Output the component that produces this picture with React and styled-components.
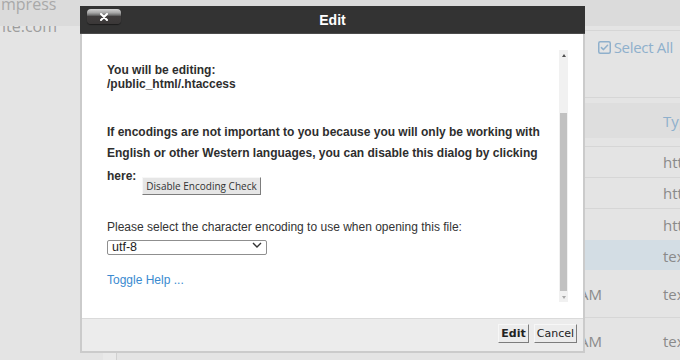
import React from "react";
import styled, { createGlobalStyle } from "styled-components";

const GlobalStyle = createGlobalStyle`
  html, body {
    margin: 0;
    padding: 0;
  }
  body {
    background: #e4e4e4;
    font-family: "Open Sans", sans-serif;
  }
`;

const COLS = "14px 1fr 150px 61px 80px";

const Page = styled.div`
  position: relative;
  width: 680px;
  height: 360px;
  overflow: hidden;
  background: #e4e4e4;
  display: flex;
  flex-direction: column;
`;

const TopBand = styled.div`
  position: relative;
  z-index: 1;
  flex: none;
  height: 26px;
  background: #dbdbdb;
  padding-left: 1px;
  font: 16px/8px "Open Sans", sans-serif;
  color: #a9a9a9;
`;

const Backdrop = styled.div`
  flex: 1;
  min-height: 0;
  display: grid;
  grid-template-columns: 103px 1fr;
`;

const Sidebar = styled.div`
  padding-left: 2px;
`;

const SiteName = styled.div`
  margin-top: -4px;
  font: 16px/8px "Open Sans", sans-serif;
  color: #9d9d9d;
`;

const Main = styled.div`
  overflow: hidden;
  display: flex;
  flex-direction: column;
`;

const Toolbar = styled.div`
  flex: none;
  margin-top: 4px;
  height: 60px;
  border-top: 1px solid #d6d6d6;
  border-bottom: 1px solid #d6d6d6;
  display: flex;
  justify-content: flex-end;
  align-items: flex-start;
  padding: 6px 7px 0 0;
  box-sizing: content-box;
`;

const SelectAll = styled.div`
  display: flex;
  align-items: center;
  gap: 3px;
  font: 15px/20px "Open Sans", sans-serif;
  letter-spacing: -0.3px;
  color: #8fb0cc;
`;

const Table = styled.div`
  width: 640px;
  margin-top: 5px;
`;

const HeadRow = styled.div`
  display: grid;
  grid-template-columns: ${COLS};
  height: 35px;
  align-items: center;
  background: #dedede;
  margin-bottom: 8px;
  font: 15px/20px "Open Sans", sans-serif;
  color: #8fb0cc;
`;

const Row = styled.div`
  display: grid;
  grid-template-columns: ${COLS};
  box-sizing: border-box;
  height: ${(p) => p.$h}px;
  border-top: 1px solid ${(p) => (p.$noLine ? "transparent" : "#d6d6d6")};
  background: ${(p) => (p.$selected ? "#d3dde4" : "transparent")};
  align-items: center;
  font: 15px/20px "Open Sans", sans-serif;
  color: #8a8a8a;
`;

const CheckCell = styled.div`
  align-self: stretch;
  background: #e9e9e9;
  border-right: 1px solid #d0d0d0;
`;

const Cell = styled.div`
  white-space: nowrap;
  overflow: hidden;
  text-align: ${(p) => p.$align || "left"};
  padding-left: ${(p) => (p.$align === "right" ? 0 : 8)}px;
`;

const TypeCell = styled.div`
  white-space: nowrap;
`;

/* ---------- dialog ---------- */

const Dialog = styled.div`
  position: absolute;
  z-index: 5;
  left: 80px;
  top: 6px;
  width: 505px;
  height: 347px;
  box-sizing: border-box;
  border: 2px solid #cbcbcb;
  border-top: 0;
  background: #fff;
  display: flex;
  flex-direction: column;
  font-family: "Liberation Sans", Arial, sans-serif;
  color: #2e2e2e;
`;

const TitleBar = styled.div`
  flex: none;
  margin: 0 -2px;
  height: 28px;
  box-sizing: border-box;
  background: #333;
  border-bottom: 1px solid #4b4b4b;
  display: grid;
  grid-template-columns: 1fr auto 1fr;
  align-items: center;
`;

const CloseButton = styled.button`
  justify-self: start;
  align-self: start;
  margin: 3px 0 0 7px;
  width: 34px;
  height: 15px;
  padding: 0;
  border: 0;
  border-radius: 4px;
  background: linear-gradient(
    #d2d2d2 0%,
    #a8a8a8 25%,
    #6b6b6b 42%,
    #403d3d 48%,
    #3b3838 100%
  );
  box-shadow: 0 1px 1px rgba(0, 0, 0, 0.45);
  display: flex;
  align-items: center;
  justify-content: center;
`;

const Title = styled.div`
  font: bold 14px/18px "Liberation Sans", Arial, sans-serif;
  color: #fff;
`;

const Body = styled.div`
  flex: 1;
  min-height: 0;
  display: flex;
`;

const Content = styled.div`
  flex: 1;
  padding: 29px 0 0 25px;
`;

const Strong = styled.div`
  font: bold 12px/${(p) => p.$lh || 14}px "Liberation Sans", Arial, sans-serif;
  margin-top: ${(p) => p.$mt || 0}px;
`;

const HereRow = styled.div`
  display: flex;
  align-items: flex-start;
  margin-top: 2px;
  font: bold 12px/21px "Liberation Sans", Arial, sans-serif;
`;

const PlainButton = styled.button`
  height: 18px;
  margin: ${(p) => p.$m || 0};
  padding: 0 3px;
  box-sizing: border-box;
  background: #e6e6e6;
  color: #333;
  border: 1px solid;
  border-color: #f7f7f7 #7d7d7d #7d7d7d #f7f7f7;
  border-radius: 0;
  font: 10px/14px "Open Sans", sans-serif;
  white-space: nowrap;
`;

const FooterButton = styled(PlainButton)`
  height: 19px;
  padding: 0 2px;
  font: ${(p) => (p.$bold ? "bold" : "normal")} 11px/15px "DejaVu Sans", Verdana, sans-serif;
  color: #222;
  background: #ececec;
`;

const Label = styled.div`
  margin-top: 25px;
  font: 12px/14px "Liberation Sans", Arial, sans-serif;
  color: #333;
`;

const SelectWrap = styled.div`
  position: relative;
  width: 160px;
  height: 15px;
  margin-top: 3px;
`;

const Select = styled.select`
  appearance: none;
  width: 100%;
  height: 100%;
  box-sizing: border-box;
  margin: 0;
  padding: 0 0 0 4px;
  border: 1px solid #8f8f8f;
  border-radius: 2px;
  background: #fff;
  font: 12.5px/13px "Liberation Sans", Arial, sans-serif;
  color: #222;
  outline: none;
`;

const Chevron = styled.svg`
  position: absolute;
  right: 5px;
  top: 5px;
  pointer-events: none;
`;

const HelpLink = styled.a`
  display: block;
  margin-top: 21px;
  font: 12px/14px "Liberation Sans", Arial, sans-serif;
  color: #3a8ad0;
  text-decoration: none;
`;

const Scrollbar = styled.div`
  flex: none;
  width: 9px;
  margin: 16px 15px 16px 0;
  background: #f1f1f1;
  display: flex;
  flex-direction: column;
`;

const Arrow = styled.div`
  flex: none;
  height: 10px;
  display: flex;
  align-items: center;
  justify-content: center;

  &::after {
    content: "";
    border-left: 2.5px solid transparent;
    border-right: 2.5px solid transparent;
    ${(p) =>
      p.$dir === "up"
        ? "border-bottom: 3px solid #505050;"
        : "border-top: 3px solid #a8a8a8;"}
  }
`;

const Track = styled.div`
  flex: 1;
  display: flex;
  flex-direction: column;
  padding: 53px 1px 1px;
`;

const Thumb = styled.div`
  flex: 1;
  background: #c1c1c1;
`;

const Footer = styled.div`
  flex: none;
  height: 33px;
  box-sizing: border-box;
  border-top: 1px solid #dadada;
  background: #ececec;
  display: flex;
  justify-content: flex-end;
  align-items: flex-start;
  gap: 5px;
  padding: 5px 6px 0 0;
`;

const rows = [
  { h: 31, name: "cgi-bin", date: "", type: "httpd/unix-directory" },
  { h: 31, name: "public_ftp", date: "", type: "httpd/unix-directory" },
  { h: 32, name: "wp-content", date: "", type: "httpd/unix-directory" },
  { h: 30, name: ".htaccess", date: "", type: "text/x-generic", selected: true },
  { h: 47, name: "index.php", date: "Jul 8, 2022, 9:12 AM", type: "text/x-generic", noLine: true },
  { h: 46, name: "license.txt", date: "Jul 8, 2022, 9:12 AM", type: "text/plain" },
];

export default function App() {
  return (
    <>
      <GlobalStyle />
      <Page>
        <TopBand>mpress</TopBand>
        <Backdrop>
          <Sidebar>
            <SiteName>ite.com</SiteName>
          </Sidebar>
          <Main>
            <Toolbar>
              <SelectAll>
                <svg width="13" height="13" viewBox="0 0 13 13" fill="none">
                  <rect x="0.75" y="0.75" width="11.5" height="11.5" rx="1.5" stroke="#8fb0cc" strokeWidth="1.5" />
                  <path d="M3.4 6.6 5.5 8.6 9.6 4.2" stroke="#8fb0cc" strokeWidth="1.5" strokeLinecap="round" strokeLinejoin="round" />
                </svg>
                Select All
              </SelectAll>
            </Toolbar>
            <Table>
              <HeadRow>
                <span />
                <Cell>Name</Cell>
                <span />
                <span />
                <TypeCell>Type</TypeCell>
              </HeadRow>
              {rows.map((r) => (
                <Row key={r.name} $h={r.h} $selected={r.selected} $noLine={r.noLine || r.selected}>
                  <CheckCell />
                  <Cell>{r.name}</Cell>
                  <Cell $align="right">{r.date}</Cell>
                  <span />
                  <TypeCell>{r.type}</TypeCell>
                </Row>
              ))}
            </Table>
          </Main>
        </Backdrop>

        <Dialog>
          <TitleBar>
            <CloseButton aria-label="Close">
              <svg width="8" height="8" viewBox="0 0 8 8">
                <path d="M1 1 7 7M7 1 1 7" stroke="#fff" strokeWidth="2" strokeLinecap="round" />
              </svg>
            </CloseButton>
            <Title>Edit</Title>
            <span />
          </TitleBar>

          <Body>
            <Content>
              <Strong>You will be editing:</Strong>
              <Strong>/public_html/.htaccess</Strong>

              <Strong $lh={21} $mt={31}>
                If encodings are not important to you because you will only be working with
                <br />
                English or other Western languages, you can disable this dialog by clicking
              </Strong>
              <HereRow>
                here:
                <PlainButton $m="11px 0 0 6px">Disable Encoding Check</PlainButton>
              </HereRow>

              <Label>Please select the character encoding to use when opening this file:</Label>
              <SelectWrap>
                <Select defaultValue="utf-8">
                  <option value="utf-8">utf-8</option>
                  <option value="iso-8859-1">iso-8859-1</option>
                </Select>
                <Chevron width="10" height="6" viewBox="0 0 10 6" fill="none">
                  <path d="M1 1 5 5 9 1" stroke="#333" strokeWidth="1.4" />
                </Chevron>
              </SelectWrap>

              <HelpLink href="#">Toggle Help ...</HelpLink>
            </Content>

            <Scrollbar>
              <Arrow $dir="up" />
              <Track>
                <Thumb />
              </Track>
              <Arrow $dir="down" />
            </Scrollbar>
          </Body>

          <Footer>
            <FooterButton $bold>Edit</FooterButton>
            <FooterButton>Cancel</FooterButton>
          </Footer>
        </Dialog>
      </Page>
    </>
  );
}
